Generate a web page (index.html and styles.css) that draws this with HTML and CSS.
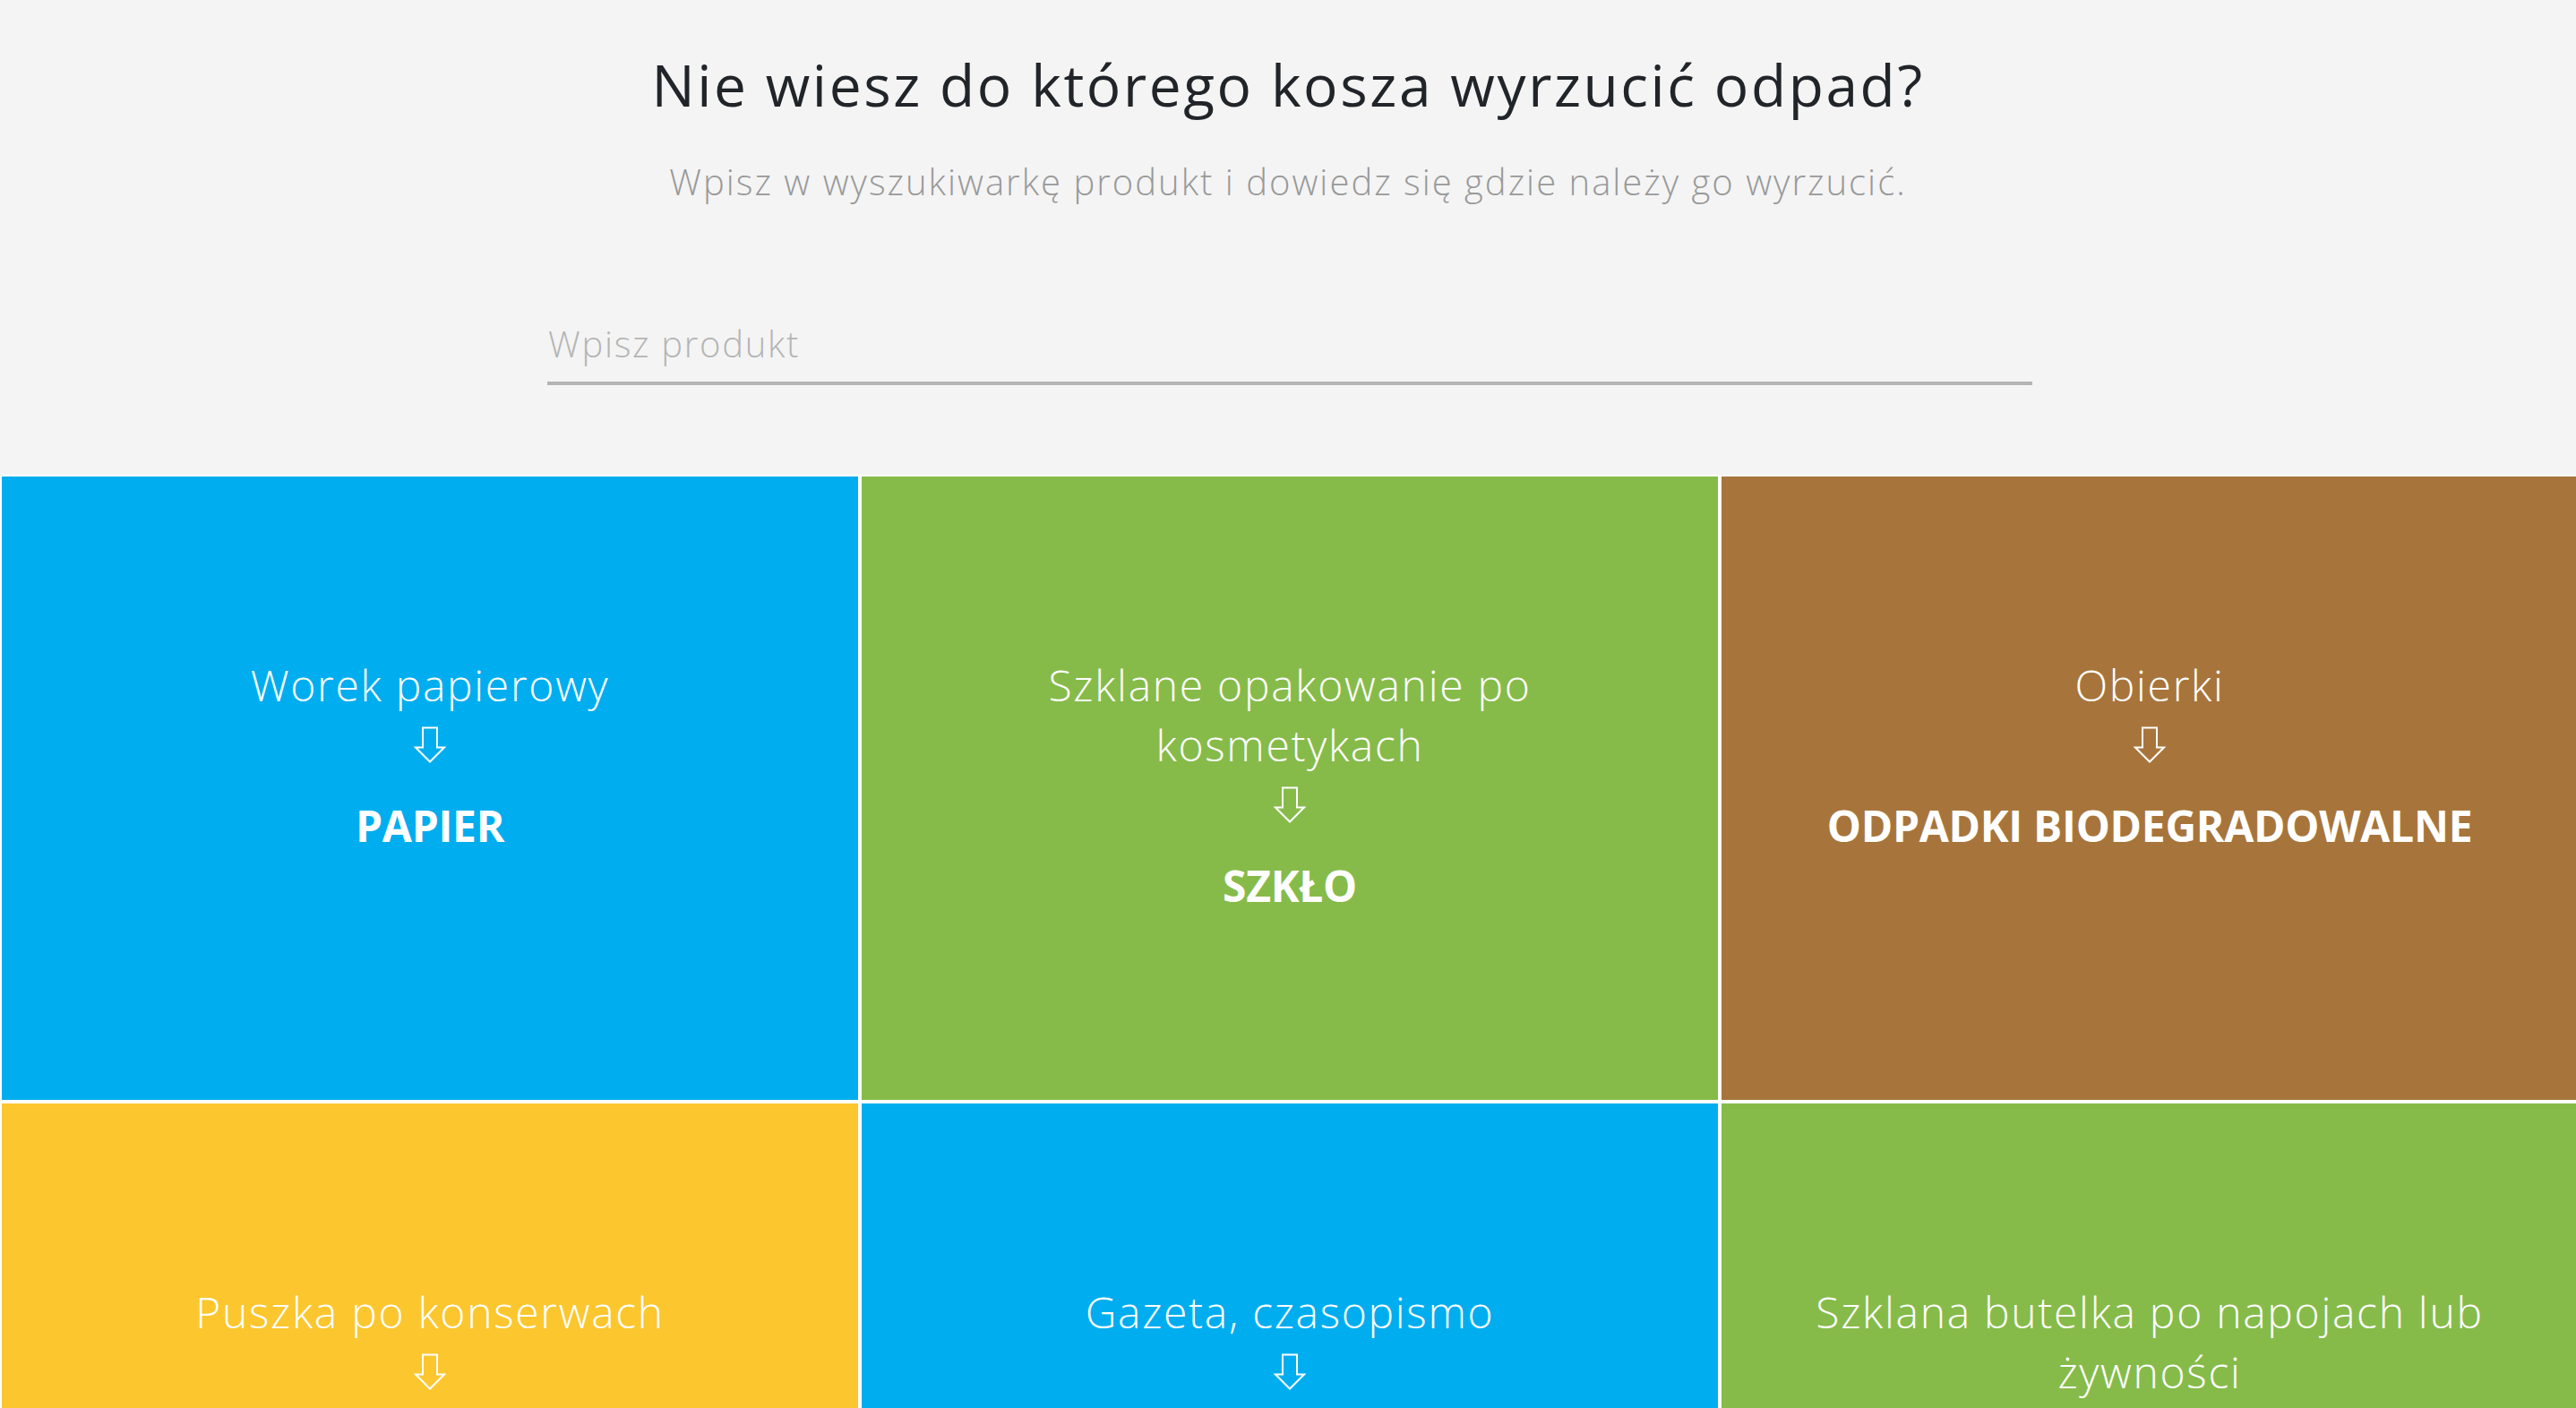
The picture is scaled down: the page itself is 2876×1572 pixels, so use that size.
FILE: index.html
```html
<!DOCTYPE html>
<html lang="pl">
<head>
<meta charset="utf-8">
<title>Segregacja odpadów</title>
<link rel="stylesheet" href="styles.css">
</head>
<body>
<header class="intro">
  <h1 class="title">Nie wiesz do którego kosza wyrzucić odpad?</h1>
  <p class="lead">Wpisz w wyszukiwarkę produkt i dowiedz się gdzie należy go wyrzucić.</p>
  <div class="search">
    <input class="search-input" type="text" placeholder="Wpisz produkt">
  </div>
</header>
<main class="grid">
  <section class="card blue">
    <p class="item">Worek papierowy</p>
    <div class="arrow"><svg width="36" height="41" viewBox="0 0 36 41"><path d="M10 1.5H26V23.5H34L18 39.5L2 23.5H10Z" fill="none" stroke="#fff" stroke-width="2"/></svg></div>
    <p class="bin">PAPIER</p>
  </section>
  <section class="card green">
    <p class="item">Szklane opakowanie po kosmetykach</p>
    <div class="arrow"><svg width="36" height="41" viewBox="0 0 36 41"><path d="M10 1.5H26V23.5H34L18 39.5L2 23.5H10Z" fill="none" stroke="#fff" stroke-width="2"/></svg></div>
    <p class="bin">SZKŁO</p>
  </section>
  <section class="card brown">
    <p class="item">Obierki</p>
    <div class="arrow"><svg width="36" height="41" viewBox="0 0 36 41"><path d="M10 1.5H26V23.5H34L18 39.5L2 23.5H10Z" fill="none" stroke="#fff" stroke-width="2"/></svg></div>
    <p class="bin">ODPADKI BIODEGRADOWALNE</p>
  </section>
  <section class="card yellow">
    <p class="item">Puszka po konserwach</p>
    <div class="arrow"><svg width="36" height="41" viewBox="0 0 36 41"><path d="M10 1.5H26V23.5H34L18 39.5L2 23.5H10Z" fill="none" stroke="#fff" stroke-width="2"/></svg></div>
    <p class="bin">METALE I TWORZYWA SZTUCZNE</p>
  </section>
  <section class="card blue">
    <p class="item">Gazeta, czasopismo</p>
    <div class="arrow"><svg width="36" height="41" viewBox="0 0 36 41"><path d="M10 1.5H26V23.5H34L18 39.5L2 23.5H10Z" fill="none" stroke="#fff" stroke-width="2"/></svg></div>
    <p class="bin">PAPIER</p>
  </section>
  <section class="card green">
    <p class="item">Szklana butelka po napojach lub żywności</p>
    <div class="arrow"><svg width="36" height="41" viewBox="0 0 36 41"><path d="M10 1.5H26V23.5H34L18 39.5L2 23.5H10Z" fill="none" stroke="#fff" stroke-width="2"/></svg></div>
    <p class="bin">SZKŁO</p>
  </section>
</main>
</body>
</html>
```
FILE: styles.css
```css
html, body {
  margin: 0;
  padding: 0;
}
body {
  font-family: "Open Sans", "Noto Sans", sans-serif;
  background: #ffffff;
  overflow-x: hidden;
}
.intro {
  background: #f4f4f4;
  padding: 57px 0 100px;
  text-align: center;
}
.title {
  margin: 0;
  font-size: 64px;
  line-height: 76.8px;
  font-weight: 500;
  letter-spacing: 2.6px;
  color: #212529;
}
.lead {
  margin: 39px 0 0;
  font-size: 40px;
  line-height: 60px;
  font-weight: 300;
  letter-spacing: 2px;
  color: #999999;
}
.search {
  width: 1658px;
  margin: 121.2px auto 0;
  padding-left: 4px;
}
.search-input {
  display: block;
  width: 100%;
  box-sizing: border-box;
  height: 76px;
  padding: 0 0 12px 1px;
  border: none;
  border-bottom: 4px solid #b4b4b4;
  background: transparent;
  font-family: inherit;
  font-size: 40px;
  font-weight: 300;
  letter-spacing: 1.7px;
  color: #333;
  outline: none;
}
.search-input::placeholder {
  color: #b4b4b4;
}
.grid {
  display: grid;
  grid-template-columns: repeat(3, 956px);
  grid-auto-rows: 696px;
  gap: 4px;
  padding: 2px 0 0 2px;
  background: #ffffff;
}
.card {
  padding: 199px 70px 0;
  text-align: center;
  color: #ffffff;
  font-size: 48px;
  line-height: 67.2px;
}
.blue { background: #00aeef; }
.green { background: #86bb4a; }
.brown { background: #a7753b; }
.yellow { background: #fcc62e; }
.item {
  margin: 0;
  font-weight: 300;
  letter-spacing: 1.7px;
}
.arrow {
  height: 67.2px;
  display: flex;
  align-items: center;
  justify-content: center;
}
.arrow svg {
  display: block;
}
.bin {
  margin: 22.4px 0 0;
  font-weight: 700;
  letter-spacing: -0.3px;
}
```
